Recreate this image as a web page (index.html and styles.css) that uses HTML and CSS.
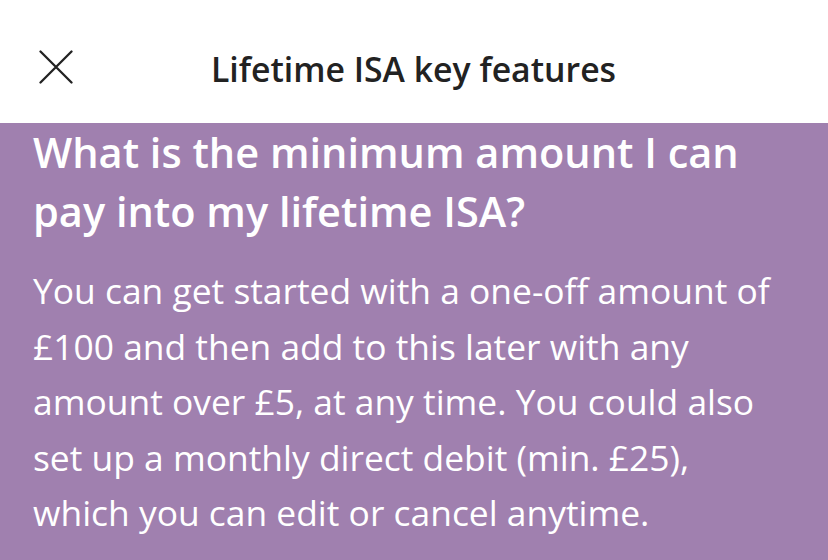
FILE: index.html
```html
<!DOCTYPE html>
<html lang="en">
<head>
<meta charset="utf-8">
<title>Lifetime ISA key features</title>
<link rel="stylesheet" href="styles.css">
</head>
<body>
<header class="topbar">
  <button class="close" aria-label="Close">
    <svg width="34" height="34" viewBox="0 0 34 34" fill="none" stroke="#222" stroke-width="2.3" stroke-linecap="round"><path d="M1.5 1.5 L32.5 32.5 M32.5 1.5 L1.5 32.5"/></svg>
  </button>
  <h1 class="title">Lifetime ISA key features</h1>
  <span class="spacer"></span>
</header>
<main class="panel">
  <h2 class="question">What is the minimum amount I can pay into my lifetime ISA?</h2>
  <p class="answer">You can get started with a one-off amount of £100 and then add to this later with any amount over £5, at any time. You could also set up a monthly direct debit (min. £25), which you can edit or cancel anytime.</p>
</main>
</body>
</html>
```
FILE: styles.css
```css
html, body {
  margin: 0;
  padding: 0;
  height: 100%;
}
body {
  background: #a080af;
  font-family: "Open Sans", "Lato", sans-serif;
  font-variant-ligatures: none;
  overflow: hidden;
}
.topbar {
  height: 123px;
  background: #ffffff;
  display: grid;
  grid-template-columns: 1fr auto 1fr;
  align-items: center;
  padding: 0 0 0 39px;
  box-sizing: border-box;
}
.close {
  justify-self: start;
  background: none;
  border: 0;
  padding: 0;
  width: 34px;
  height: 34px;
  margin-top: 10px;
  display: flex;
}
.title {
  margin: 0;
  margin-top: 15px;
  font-size: 33.8px;
  font-weight: 600;
  color: #222222;
  transform: translateX(-20px);
}
.panel {
  padding: 0 40px 0 33px;
  color: #ffffff;
}
.question {
  margin: 0;
  font-size: 41.5px;
  font-weight: 600;
  line-height: 59px;
}
.answer {
  margin: 22px 0 0;
  font-size: 35.4px;
  font-weight: 400;
  line-height: 55.5px;
}
```
